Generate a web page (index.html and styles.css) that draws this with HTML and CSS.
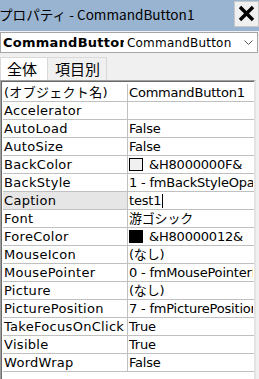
FILE: index.html
```html
<!DOCTYPE html>
<html lang="ja">
<head>
  <meta charset="UTF-8">
  <title>プロパティ - CommandButton1</title>
  <link rel="stylesheet" href="styles.css">
</head>
<body>

  <div class="titlebar">
    <span class="title">プロパティ - CommandButton1</span>
    <span class="close">
      <svg width="17" height="17" viewBox="0 0 17 17">
        <path d="M2 2 L15 15 M15 2 L2 15" stroke="#000" stroke-width="3.4"/>
      </svg>
    </span>
  </div>

  <div class="combo">
    <span class="combo-name">CommandButton1</span>
    <span class="combo-type">CommandButton</span>
    <svg class="chevron" width="9" height="6" viewBox="0 0 9 6">
      <path d="M0.5 0.5 L4.5 4.5 L8.5 0.5" fill="none" stroke="#555" stroke-width="1"/>
    </svg>
  </div>

  <div class="tabs">
    <span class="tab active">全体</span>
    <span class="tab">項目別</span>
  </div>

  <div class="grid">
    <div class="row"><span class="name">(オブジェクト名)</span><span class="value">CommandButton1</span></div>
    <div class="row"><span class="name">Accelerator</span><span class="value"></span></div>
    <div class="row"><span class="name">AutoLoad</span><span class="value">False</span></div>
    <div class="row"><span class="name">AutoSize</span><span class="value">False</span></div>
    <div class="row"><span class="name">BackColor</span><span class="value"><i class="swatch light"></i>&amp;H8000000F&amp;</span></div>
    <div class="row"><span class="name">BackStyle</span><span class="value">1 - fmBackStyleOpaque</span></div>
    <div class="row"><span class="name selected">Caption</span><span class="value">test1<i class="caret"></i></span></div>
    <div class="row"><span class="name">Font</span><span class="value">游ゴシック</span></div>
    <div class="row"><span class="name">ForeColor</span><span class="value"><i class="swatch dark"></i>&amp;H80000012&amp;</span></div>
    <div class="row"><span class="name">MouseIcon</span><span class="value">(なし)</span></div>
    <div class="row"><span class="name">MousePointer</span><span class="value">0 - fmMousePointerDefault</span></div>
    <div class="row"><span class="name">Picture</span><span class="value">(なし)</span></div>
    <div class="row"><span class="name">PicturePosition</span><span class="value">7 - fmPicturePositionAboveCenter</span></div>
    <div class="row"><span class="name">TakeFocusOnClick</span><span class="value">True</span></div>
    <div class="row"><span class="name">Visible</span><span class="value">True</span></div>
    <div class="row"><span class="name">WordWrap</span><span class="value">False</span></div>
  </div>

</body>
</html>
```

FILE: styles.css
```css
body {
  margin: 0;
  width: 259px;
  height: 379px;
  overflow: hidden;
  background-color: #f0f0f0;
  font-family: "DejaVu Sans", "Noto Sans CJK JP", sans-serif;
}
.titlebar {
  height: 31px;
  background-color: #99b4d1;
  display: flex;
  align-items: center;
  justify-content: space-between;
}
.title {
  font-family: "Noto Sans CJK JP", sans-serif;
  font-size: 13.6px;
  margin-left: -1px;
  margin-top: -3px;
}
.close {
  width: 23px;
  height: 24px;
  margin-right: 0;
  margin-top: -4px;
  background-color: #f0f0f0;
  border: 1px solid #c8c8c8;
  display: flex;
  align-items: center;
  justify-content: center;
}
.combo {
  margin-top: 1px;
  width: 256px;
  height: 19px;
  border: 1px solid #a5a5a5;
  background-color: #fff;
  display: flex;
  align-items: center;
  position: relative;
}
.combo-name {
  font-weight: bold;
  font-size: 13px;
  letter-spacing: 0.25px;
  width: 121px;
  overflow: hidden;
  white-space: nowrap;
  padding-left: 2px;
}
.combo-type {
  margin-left: 3px;
  font-size: 12px;
  letter-spacing: 0.2px;
}
.chevron {
  position: absolute;
  right: 4px;
  top: 7px;
}
.tabs {
  margin-top: 4px;
  height: 23px;
  display: flex;
  font-family: "Noto Sans CJK JP", sans-serif;
  font-size: 15px;
}
.tab {
  padding: 0 6px;
  line-height: 22px;
  border: 1px solid #d9d9d9;
  border-bottom: none;
}
.tab.active {
  background-color: #fff;
  width: 34px;
}
.tab + .tab {
  border-left: none;
  padding-left: 7px;
}
.grid {
  height: 297px;
  border-left: 1px solid #a0a0a0;
  border-top: 1px solid #a0a0a0;
  box-shadow: inset 1px 1px 0 #696969;
  padding: 3px 0 0 2px;
  margin-right: 3px;
  border-right: 2px solid #e3e3e3;
  background-color: #fff;
  font-size: 13px;
}
.row {
  display: grid;
  grid-template-columns: 125px 125px;
  height: 18px;
  border-bottom: 1px solid #c0c0c0;
  box-sizing: border-box;
}
.name, .value {
  white-space: nowrap;
  overflow: hidden;
  line-height: 17px;
  padding-left: 1px;
}
.name {
  border-right: 1px solid #c0c0c0;
  letter-spacing: 0.3px;
}
.value {
  letter-spacing: -0.2px;
}
.name.selected {
  background-color: #e6e6e6;
}
.swatch {
  display: inline-block;
  width: 14px;
  height: 13px;
  box-sizing: border-box;
  vertical-align: -2px;
  margin-right: 6px;
  border: 1px solid #000;
}
.swatch.light {
  background-color: #f0f0f0;
}
.swatch.dark {
  background-color: #000;
}
.caret {
  display: inline-block;
  width: 1px;
  height: 14px;
  background-color: #000;
  vertical-align: -3px;
  margin-left: 1px;
}
```
